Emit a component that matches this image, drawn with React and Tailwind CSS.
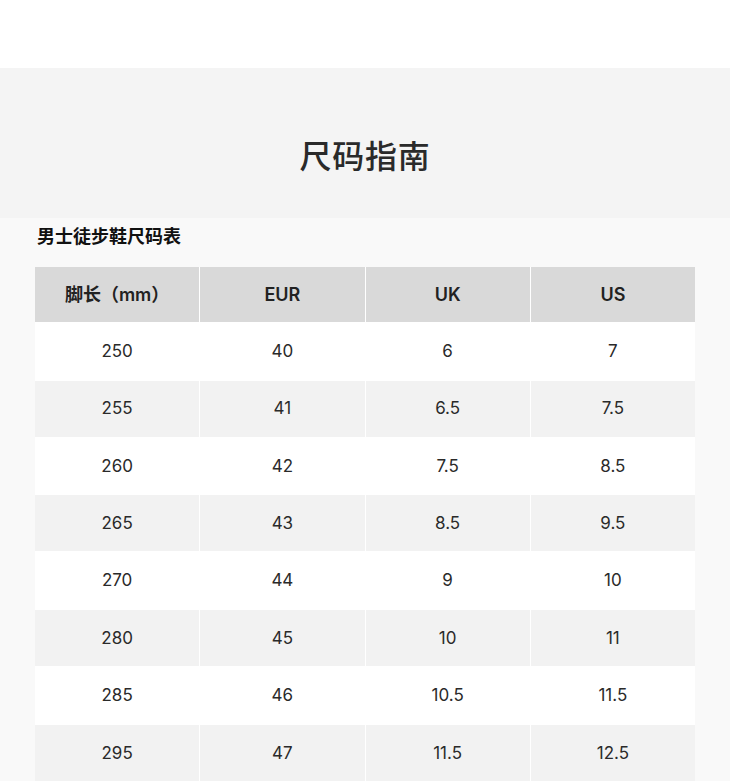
import React from 'react';

const rows = [
  ['250', '40', '6', '7'],
  ['255', '41', '6.5', '7.5'],
  ['260', '42', '7.5', '8.5'],
  ['265', '43', '8.5', '9.5'],
  ['270', '44', '9', '10'],
  ['280', '45', '10', '11'],
  ['285', '46', '10.5', '11.5'],
  ['295', '47', '11.5', '12.5'],
];

const headers = ['脚长（mm）', 'EUR', 'UK', 'US'];

export default function App() {
  return (
    <div
      className="w-[730px] h-[781px] overflow-hidden bg-white text-[#222]"
      style={{ fontFamily: '"Inter", "Noto Sans CJK SC", sans-serif' }}
    >
      <div className="h-[68px] bg-white" />

      {/* Title band */}
      <div className="h-[150px] bg-[#f4f4f4] flex items-center justify-center pt-[22px]">
        <h1 className="text-[32px] font-medium text-[#2a2a2a] tracking-wide" style={{ fontFamily: '"Noto Sans CJK SC", sans-serif' }}>
          尺码指南
        </h1>
      </div>

      {/* Table section */}
      <div className="bg-[#f9f9f9] px-[35px] pb-10">
        <h2 className="h-[49px] pt-[4px] pl-[2px] text-[18px] font-bold text-[#111]" style={{ fontFamily: '"Noto Sans CJK SC", sans-serif' }}>
          男士徒步鞋尺码表
        </h2>

        <div className="w-[660px] flex flex-col gap-[1.35px] bg-white">
          <div className="grid grid-cols-4 gap-px h-[55px]">
            {headers.map((h) => (
              <div key={h} className="bg-[#d9d9d9] flex items-center justify-center text-[18px] font-semibold text-[#222]">
                {h}
              </div>
            ))}
          </div>
          {rows.map((r, i) => (
            <div key={r[0]} className="grid grid-cols-4 gap-px h-[56px]">
              {r.map((c, j) => (
                <div
                  key={j}
                  className={`${i % 2 === 0 ? 'bg-white' : 'bg-[#f2f2f2]'} flex items-center justify-center pt-[1px] text-[17px] text-[#2a2a2a]`}
                >
                  {c}
                </div>
              ))}
            </div>
          ))}
        </div>
      </div>
    </div>
  );
}
